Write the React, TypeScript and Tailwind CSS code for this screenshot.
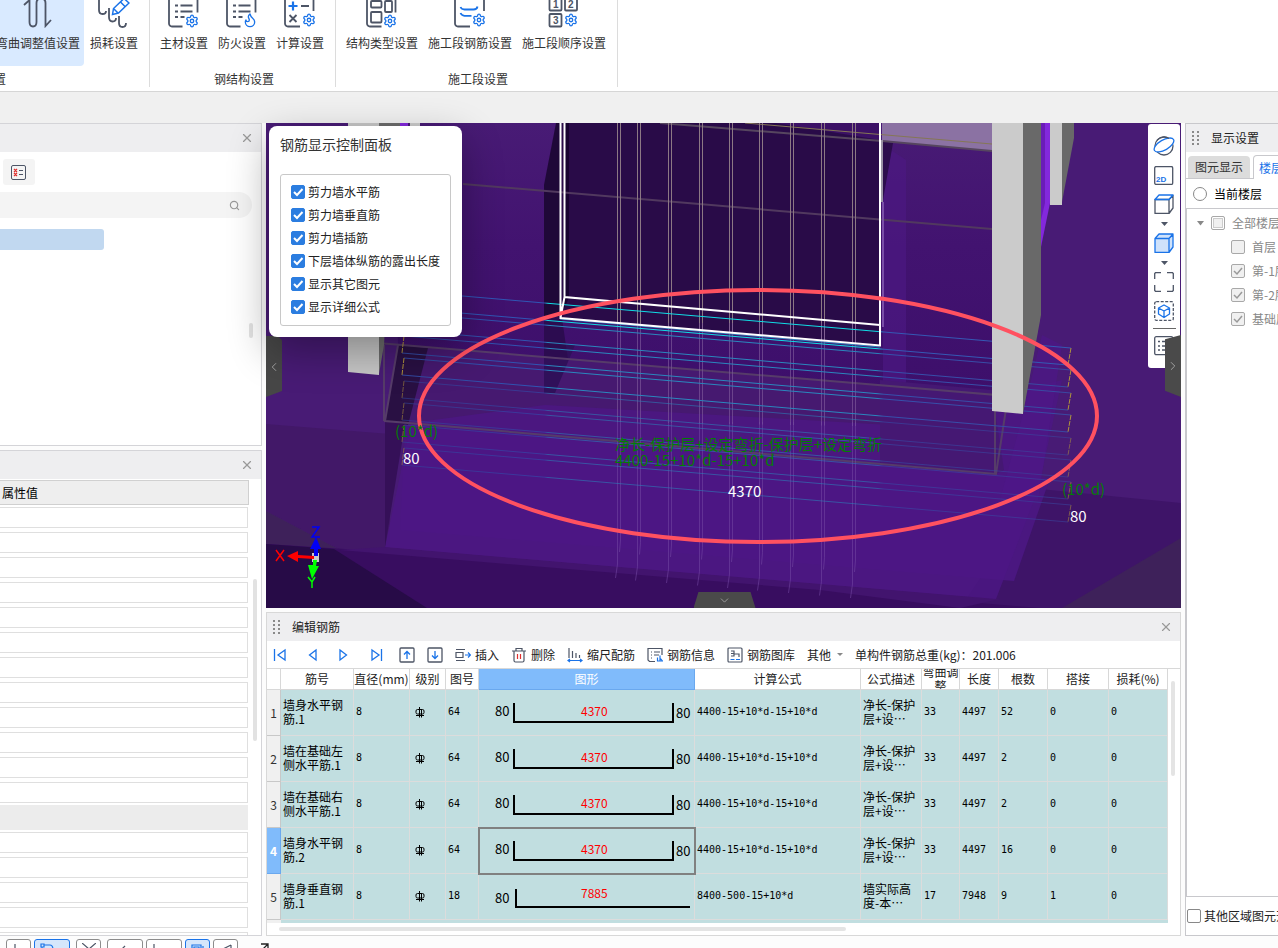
import type { ReactNode } from "react";
import { ChevronDown, ChevronLeft, ChevronRight, Flame, Search, Settings, X } from "lucide-react";

const INK = "#4d5566";
const BLUE = "#1a73e8";

type RibbonItem = {
  label: string;
  icon: ReactNode;
  active?: boolean;
};

type RebarRow = {
  name: string;
  no: string;
  shape: "u" | "l";
  total: string;
  formula: string;
  desc: string;
  bend: string;
  length: string;
  count: string;
  lap: string;
};

const BAR_FORMULA = "4400-15+10*d-15+10*d";

const rows: RebarRow[] = [
  { name: "墙身水平钢筋.1", no: "64", shape: "u", total: "4370", formula: BAR_FORMULA, desc: "净长-保护层+设…", bend: "33", length: "4497", count: "52", lap: "0" },
  { name: "墙在基础左侧水平筋.1", no: "64", shape: "u", total: "4370", formula: BAR_FORMULA, desc: "净长-保护层+设…", bend: "33", length: "4497", count: "2", lap: "0" },
  { name: "墙在基础右侧水平筋.1", no: "64", shape: "u", total: "4370", formula: BAR_FORMULA, desc: "净长-保护层+设…", bend: "33", length: "4497", count: "2", lap: "0" },
  { name: "墙身水平钢筋.2", no: "64", shape: "u", total: "4370", formula: BAR_FORMULA, desc: "净长-保护层+设…", bend: "33", length: "4497", count: "16", lap: "0" },
  { name: "墙身垂直钢筋.1", no: "18", shape: "l", total: "7885", formula: "8400-500-15+10*d", desc: "墙实际高度-本…", bend: "17", length: "7948", count: "9", lap: "1" },
];

const displayOptions = [
  "剪力墙水平筋",
  "剪力墙垂直筋",
  "剪力墙插筋",
  "下层墙体纵筋的露出长度",
  "显示其它图元",
  "显示详细公式",
];

/* ---------- ribbon ---------- */

function RibbonIcon({ children }: { children: ReactNode }) {
  return (
    <svg width="32" height="28" viewBox="0 0 32 28" fill="none" stroke={INK} strokeWidth="1.8">
      {children}
    </svg>
  );
}

function Gear({ x, y }: { x: number; y: number }) {
  return <Settings x={x - 7} y={y - 7} size={14} color={BLUE} strokeWidth={2.2} />;
}

const docLines = (
  <>
    <path d="M1 0V23.5a3 3 0 0 0 3 3H14.5M29.5 0V12.5" />
    <path d="M7 5.5h3M12.5 5.5h12M7 11.5h3M12.5 11.5h12M7 17h3M12.5 17h4" />
  </>
);

const bendItems: RibbonItem[] = [
  {
    label: "弯曲调整值设置",
    active: true,
    icon: (
      <RibbonIcon>
        <path d="M2 5L7.5 0V22q0 4.5 3.5 4.5t3.5-4.5V3q0-4.5 4.5-4.5T23.5 3V26L29 20" />
      </RibbonIcon>
    ),
  },
  {
    label: "损耗设置",
    icon: (
      <RibbonIcon>
        <path d="M1 0V10q0 4 3.5 4T8 11M11 8V17q0 4.500 3.5 4.5T18 18M21 16V23q0 4 3.5 4T28 23" />
        <path d="M14.5 14.5l1-6L26-1.5 31 3 20.5 13zM22.5 2l4.5 4.5M16 9l4 4" stroke={BLUE} strokeWidth="1.5" />
      </RibbonIcon>
    ),
  },
];

const steelItems: RibbonItem[] = [
  {
    label: "主材设置",
    icon: (
      <RibbonIcon>
        {docLines}
        <Gear x={24} y={21} />
      </RibbonIcon>
    ),
  },
  {
    label: "防火设置",
    icon: (
      <RibbonIcon>
        {docLines}
        <Flame x={16} y={12} size={16} color={BLUE} strokeWidth={2} />
      </RibbonIcon>
    ),
  },
  {
    label: "计算设置",
    icon: (
      <RibbonIcon>
        <path d="M1 0V23.5a3 3 0 0 0 3 3H16M29.5 0V11M17 6h8M5.5 15l7 7M12.5 15l-7 7" />
        <path d="M4.5 6h9M9 1.5v9" stroke={BLUE} strokeWidth="2.2" />
        <Gear x={25} y={20} />
      </RibbonIcon>
    ),
  },
];

const stageItems: RibbonItem[] = [
  {
    label: "结构类型设置",
    icon: (
      <RibbonIcon>
        <path d="M1 0V23.5a3 3 0 0 0 3 3H15.5M29.5 0V12.5" />
        <rect x="5" y="1" width="10.5" height="6.5" rx="1" />
        <rect x="19" y="1" width="7" height="11" rx="1" />
        <rect x="5" y="12" width="10.5" height="10.5" rx="1" />
        <Gear x={24} y={21} />
      </RibbonIcon>
    ),
  },
  {
    label: "施工段钢筋设置",
    icon: (
      <RibbonIcon>
        <path d="M1 0V23.5a3 3 0 0 0 3 3H16M30 0V11" />
        <path d="M6.5 7q1 2.5 4 2.5h9q3.5 0 4-3M6.5 13q1 2.5 4 2.8h7" stroke={BLUE} />
        <Gear x={25} y={20} />
      </RibbonIcon>
    ),
  },
  {
    label: "施工段顺序设置",
    icon: (
      <RibbonIcon>
        <rect x="1.5" y="-2" width="12" height="12.5" rx="1" />
        <rect x="17" y="-2" width="12" height="12.5" rx="1" />
        <rect x="1.5" y="14" width="12" height="12.5" rx="1" />
        <g className="font-['Liberation_Sans',sans-serif] text-[10px] font-bold" fill={INK} stroke="none">
          <text x="5" y="8">1</text>
          <text x="20" y="8">2</text>
          <text x="5" y="24">3</text>
        </g>
        <Gear x={23} y={20} />
      </RibbonIcon>
    ),
  },
];

function RibbonButtons({ items }: { items: RibbonItem[] }) {
  return (
    <div className="flex gap-0.5">
      {items.map((item) => (
        <button
          key={item.label}
          className={`flex h-[66px] shrink-0 flex-col items-center gap-[5px] rounded-b px-1 ${item.active ? "bg-[#d9eaff]" : ""}`}
        >
          {item.icon}
          <span className="whitespace-nowrap leading-5">{item.label}</span>
        </button>
      ))}
    </div>
  );
}

function RibbonGroup({ title, items }: { title: string; items: RibbonItem[] }) {
  return (
    <div className="flex h-[87px] flex-col justify-between border-r border-[#dcdcdc] pl-1.5 pr-[7px]">
      <RibbonButtons items={items} />
      <div className="pl-1 text-center leading-4">{title}</div>
    </div>
  );
}

function Ribbon() {
  return (
    <header className="flex h-[92px] shrink-0 overflow-hidden border-b border-[#d6d6d6] bg-white">
      <div className="flex h-[87px] w-[150px] flex-col items-end justify-between overflow-hidden border-r border-[#dcdcdc] pr-[7px]">
        <RibbonButtons items={bendItems} />
        <div className="-ml-1.5 self-start leading-4">置</div>
      </div>
      <RibbonGroup title="钢结构设置" items={steelItems} />
      <RibbonGroup title="施工段设置" items={stageItems} />
    </header>
  );
}

/* ---------- left side ---------- */

function LeftSidebar() {
  return (
    <aside className="flex w-[262px] shrink-0 flex-col gap-1">
      <section className="flex h-[323px] shrink-0 flex-col border-y border-r border-[#d4d4d8] bg-white">
        <div className="flex h-7 items-center justify-end bg-[#eeeef0] pr-[7px]">
          <button aria-label="关闭">
            <X size={14} color="#999" strokeWidth={2} />
          </button>
        </div>
        <div className="px-[3px] pt-[7px]">
          <button aria-label="列表" className="flex h-[26px] w-8 items-center justify-center rounded-[3px] bg-[#f4f4f4]">
            <svg width="16" height="15" viewBox="0 0 16 15" fill="none" stroke={INK}>
              <rect x="0.5" y="0.5" width="14" height="14" rx="1.5" />
              <path d="M8 5.5h4M8 9.5h4" />
              <path d="M3 4l3 3M6 4l-3 3M3 8l3 3M6 8l-3 3" stroke="#e03030" strokeWidth="1.3" />
            </svg>
          </button>
        </div>
        <label className="mt-[7px] mr-[9px] flex h-[26px] items-center rounded-r-full bg-[#f4f4f4] pr-3">
          <input aria-label="搜索" className="min-w-0 flex-1 bg-transparent outline-none" />
          <Search size={11} color="#999" strokeWidth={2.5} />
        </label>
        <div className="relative flex-1 pt-[11px]">
          <div className="h-[21px] w-[104px] rounded-r-[3px] bg-[#c1d8f0]" />
          <div className="absolute right-2 top-[105px] h-[15px] w-1 rounded-full bg-[#e2e2e2]" />
        </div>
      </section>

      <section className="flex min-h-0 flex-1 flex-col border-y border-r border-[#d4d4d8] bg-white">
        <div className="flex h-7 shrink-0 items-center justify-end bg-[#eeeef0] pr-[7px]">
          <button aria-label="关闭">
            <X size={14} color="#999" strokeWidth={2} />
          </button>
        </div>
        <div className="relative mt-px min-h-0 flex-1 overflow-hidden">
          <div className="mr-3 h-[25px] border border-l-0 border-[#d0d0d0] bg-[#eeeeee] pl-0.5 leading-6 text-black">
            属性值
          </div>
          {Array.from({ length: 18 }, (_, i) =>
            i === 12 ? (
              <div key={i} className="mr-[13px] h-[25px] bg-[#ececec]" />
            ) : (
              <div key={i} className="mr-[13px] h-[25px] py-0.5">
                <input
                  aria-label={`属性值 ${i + 1}`}
                  className="block h-[21px] w-full border border-l-0 border-[#dfdfdf] bg-white outline-none"
                />
              </div>
            ),
          )}
          <div className="absolute right-1 top-[99px] h-[162px] w-1 rounded-full bg-[#e2e2e2]" />
        </div>
      </section>
    </aside>
  );
}

/* ---------- 3D view ---------- */

const verticalBars = [617, 637, 668, 699, 729, 759, 790, 821, 852];
const hoopBars = [348, 370, 393, 415, 438, 460, 482, 505];

function Scene() {
  return (
    <svg
      className="absolute inset-0 h-full w-full bg-[#481b75]"
      viewBox="266 123 915 485"
      preserveAspectRatio="xMidYMid slice"
      fill="none"
    >
      <defs>
        <linearGradient id="bar" gradientUnits="userSpaceOnUse" x1="400" x2="1072" y1="0" y2="0">
          <stop offset="0" stopColor="#32479e" />
          <stop offset="0.215" stopColor="#2f55b4" />
          <stop offset="0.22" stopColor="#2a86bd" />
          <stop offset="0.71" stopColor="#2a86bd" />
          <stop offset="0.72" stopColor="#3550ac" />
          <stop offset="1" stopColor="#3a48a0" />
        </linearGradient>
        <linearGradient id="barTop" gradientUnits="userSpaceOnUse" x1="400" x2="1072" y1="0" y2="0">
          <stop offset="0.215" stopColor="#2f55b4" />
          <stop offset="0.22" stopColor="#10dce4" />
          <stop offset="0.71" stopColor="#10dce4" />
          <stop offset="0.72" stopColor="#3458b4" />
        </linearGradient>
        <linearGradient id="backWall" x1="0" x2="0" y1="0" y2="1">
          <stop offset="0" stopColor="#481b75" />
          <stop offset="0.45" stopColor="#421370" />
          <stop offset="1" stopColor="#3d0f6b" />
        </linearGradient>
      </defs>

      {/* ground */}
      <path d="M266 424L390 434V548L340 550 266 511z" fill="#421868" />
      <path d="M266 511L340 550 266 544z" fill="#3e215a" />
      <path d="M1040 489L1181 503V608H960z" fill="#3e1468" />
      <path d="M266 544L345 549 1181 620V608H266z" fill="#380d60" />
      <path d="M340 550L385 547 1000 599 960 608 820 590z" fill="#42146e" />
      <path d="M266 544L334 549 427 608H266z" fill="#270b47" />
      <path d="M1062 608L1181 538V608z" fill="#3e215a" />

      {/* back wall */}
      <path d="M390 123H992V395L398 345z" fill="url(#backWall)" />
      <path d="M883 145L906 160V390L883 385z" fill="#4b1882" opacity="0.7" />
      <path d="M883 141L893 143 883 200z" fill="#2c0d4c" />

      {/* footing */}
      <path d="M398 345L1008 396 996 474 385 421z" fill="#461970" />
      <path d="M405 425L1050 478 1014 581 400 530z" fill="#4a1780" />
      <path d="M411 423L545 405 890 425 1062 380 1038 490 996 599 385 547z" fill="#4c1784" opacity="0.8" />
      <path d="M880 380L992 390 1004 470 996 474 880 465z" fill="#451873" />
      <path d="M1023 414L1042 335 1062 345 1038 500H1000z" fill="#4e1888" opacity="0.6" />
      <path d="M385 421L405 424 385 547z" fill="#351058" />
      <path d="M398 345L428 348 408 425 385 421z" fill="#291043" />
      <path d="M544 340L575 345 555 393H544z" fill="#30105a" />

      {/* selected wall */}
      <path d="M556 123H562V318L544 316V185z" fill="#1f0838" />
      <path d="M544 316L562 318 568 360 544 358z" fill="#2c0c50" />
      <path d="M561 123H880V345L560 318z" fill="#290b48" />
      <path d="M565 123H569V298L563 310z" fill="#170330" />
      <path d="M776 123H880V140z" fill="#3c1166" />

      {/* beam */}
      <path d="M882 123H992V151L882 141z" fill="#8b72a3" />
      <path d="M745 123L992 144" stroke="#857755" />
      <path d="M660 123L882 141 992 151" stroke="#56465f" strokeWidth="2" />
      <path d="M463 184L992 229" stroke="#51395f" strokeWidth="2" />
      <path d="M882 140V202" stroke="#9a93a5" strokeWidth="2" />
      <path d="M883 202V327" stroke="#7a4ea8" strokeWidth="2" />

      {/* footing edges */}
      <g stroke="#563c69" strokeWidth="2">
        <path d="M378 343L1008 396 996 474 385 421 398 345M384 345V421M995 411V474" />
      </g>

      {/* vertical bars */}
      {verticalBars.map((x, i) => (
        <g key={x}>
          <path d={`M${x + 0.5} 123V${323 + i * 2.6}M${x + 3.5} 123V${323 + i * 2.6}`} stroke="#8c7884" />
          <path
            d={`M${x + 0.5} 323V${422 + i * 0.5}M${x + 3.5} 323V${422 + i * 0.5}`}
            stroke="#7a5598"
            opacity="0.7"
          />
          <path
            d={`M${x + 0.5} 422V${564 + i * 2.5}l-2 14M${x + 3.5} 422V${540 + i * 2.5}l-1 12`}
            stroke="#7548a4"
            opacity="0.55"
          />
        </g>
      ))}

      {/* horizontal bars */}
      {hoopBars.map((y, i) => (
        <g key={y} opacity={i < 4 ? 1 : 0.55}>
          <path
            d={`M404 ${y - 57}L1071 ${y}M402 ${y - 40}L1068 ${y + 17}`}
            stroke={i === 0 ? "url(#barTop)" : "url(#bar)"}
          />
          <path d={`M1071 ${y}L1068 ${y + 17}M404 ${y - 57}L402 ${y - 40}`} stroke="#b0943c" strokeDasharray="5 1" />
        </g>
      ))}
      <path d="M560 319L880 347" stroke="#2a86bd" />

      {/* wall outline */}
      <path d="M560.5 123V318L880 345.5V123M564.5 123V297L880 325M560.5 318L564.5 297" stroke="#fff" strokeWidth="2" />

      {/* columns */}
      <path d="M1041 123H1050V203L1041 247z" fill="#8328dc" />
      <path d="M1041 123H1045V203L1041 220z" fill="#6a1cb8" />
      <path d="M1050 123H1062V205H1050z" fill="#cbcbcb" />
      <path d="M1062 123H1074V138L1062 202z" fill="#696969" />
      <path d="M992 123H1023V414L992 411z" fill="#cbcbcb" />
      <path d="M1023 123H1041V315L1023 414z" fill="#696969" />
      <path d="M348 123H379V375L348 372z" fill="#c6c6c6" />
      <path d="M379 123H400V126H396L384 345 379 374z" fill="#6c6c6c" />
      <path d="M400 123h8v4h-8z" fill="#8328dc" />
      <path d="M410 123h10v4h-10z" fill="#cbcbcb" />

      <ellipse cx="758" cy="416" rx="339" ry="126" stroke="#ff5160" strokeWidth="4" />

      {/* dimension text */}
      <g className="font-['Noto_Sans_CJK_SC',sans-serif] text-[15px]">
        <g fill="#047d06">
          <text x="395" y="437">(10*d)</text>
          <text x="615" y="450">净长-保护层+设定弯折-保护层+设定弯折</text>
          <text x="615" y="466">4400-15+10*d-15+10*d</text>
          <text x="1062" y="495">(10*d)</text>
        </g>
        <g fill="#fff">
          <text x="403" y="464">80</text>
          <text x="728" y="497">4370</text>
          <text x="1070" y="522">80</text>
        </g>
      </g>

      {/* axis */}
      <path d="M312 553h7v9h-7z" fill="#ccc" />
      <path d="M314 559L298 558v4l-11-6 11-5v4l16 1z" fill="#f00" />
      <path d="M314 556v-7h-4l6-12 5 12h-3v7z" fill="#0000f5" />
      <path d="M313 560v5h-5l4 14 7-13h-3l1-6z" fill="#0f0" />
      <path d="M276 550l8 11M284 550l-8 11" stroke="#f00" strokeWidth="1.5" />
      <path d="M312 527h7l-7 10h8" stroke="#0000f5" strokeWidth="1.5" />
      <path d="M308 577l4 5 3-5M312 582v6" stroke="#0f0" strokeWidth="1.5" />
    </svg>
  );
}

function DisplayPanel() {
  return (
    <div className="absolute left-[3px] top-[3px] z-10 w-[193px] rounded-lg bg-white px-[11px] pb-[11px] pt-2 shadow-[0_14px_40px_rgba(0,0,0,0.32)]">
      <h2 className="text-sm leading-5 text-[#333]">钢筋显示控制面板</h2>
      <fieldset className="mt-5 h-[152px] rounded-[3px] border border-[#c8c8c8] px-2.5 pt-[5px]">
        {displayOptions.map((option) => (
          <label key={option} className="flex h-[23px] items-center gap-[3px] whitespace-nowrap text-[#222]">
            <span className="relative h-3.5 w-3.5">
              <input
                type="checkbox"
                defaultChecked
                className="block h-3.5 w-3.5 appearance-none rounded-[2px] border border-[#2b7de0] checked:bg-[#2b7de0]"
              />
              <svg className="pointer-events-none absolute inset-0" viewBox="0 0 14 14" fill="none" stroke="#fff" strokeWidth="2">
                <path d="M3 7l3 3 5.5-6" />
              </svg>
            </span>
            {option}
          </label>
        ))}
      </fieldset>
    </div>
  );
}

function ViewToolbar() {
  return (
    <div className="absolute right-px top-px flex w-8 flex-col items-center rounded-[3px] bg-white pb-3 pt-3">
      <button aria-label="动态观察">
        <svg width="22" height="20" viewBox="0 0 22 20" fill="none" strokeWidth="1.3">
          <circle cx="11" cy="10" r="9" stroke={INK} />
          <ellipse cx="11" cy="9" rx="11" ry="5" transform="rotate(-30 11 9)" stroke={BLUE} fill="#fff" />
          <path d="M4 4.300A9 9 0 0 1 16 2.500" stroke={INK} />
        </svg>
      </button>
      <button aria-label="二维" className="mt-[10px]">
        <svg width="20" height="19" viewBox="0 0 20 19" fill="none">
          <rect x="0.7" y="0.5" width="18" height="18" rx="1.5" stroke={INK} strokeWidth="1.3" />
          <text x="2" y="16" fill={BLUE} className="font-['Liberation_Sans',sans-serif] text-[8px] font-bold">2D</text>
        </svg>
      </button>
      <button aria-label="俯视" className="mt-[9px] flex flex-col items-center gap-2">
        <svg width="20" height="20" viewBox="0 0 20 20" fill="none" strokeWidth="1.3" strokeLinejoin="round">
          <path d="M1 5.5h14v14H1zM15 5.5l4-4V14l-4 5.5" stroke={INK} />
          <path d="M1 5.5L5 1h14l-4 4.5z" stroke={BLUE} />
        </svg>
        <svg width="7" height="4" viewBox="0 0 7 4"><path d="M0 0h7L3.5 4z" fill={INK} /></svg>
      </button>
      <button aria-label="实体" className="mt-[7px] flex flex-col items-center gap-2">
        <svg width="20" height="20" viewBox="0 0 20 20" fill="#cfe2fb" stroke={BLUE} strokeWidth="1.3" strokeLinejoin="round">
          <path d="M1 5.5h14v14H1zM15 5.5l4-4V14l-4 5.5M1 5.5L5 1h14l-4 4.5z" />
        </svg>
        <svg width="7" height="4" viewBox="0 0 7 4"><path d="M0 0h7L3.5 4z" fill={INK} /></svg>
      </button>
      <button aria-label="全屏" className="mt-[7px]">
        <svg width="20" height="20" viewBox="0 0 20 20" fill="none" stroke={INK} strokeWidth="1.3">
          <path d="M7 .7H1.5L.7 1.5V7M13 .7h5.5l.8.8V7M7 19.3H1.5L.7 18.5V13M13 19.3h5.500l.8-.8V13" />
        </svg>
      </button>
      <button aria-label="局部三维" className="mt-[9px]">
        <svg width="20" height="20" viewBox="0 0 20 20" fill="none" strokeWidth="1.3" strokeLinejoin="round">
          <rect x="0.7" y="0.7" width="18.6" height="18.6" rx="1.5" stroke={INK} strokeDasharray="3 1.5" />
          <path d="M10 4l5.5 3v6L10 16.5 4.5 13V7zM4.5 7l5.5 3 5.5-3M10 10v6.5" stroke={BLUE} />
        </svg>
      </button>
      <div className="mt-[7px] h-px w-[23px] bg-[#666]" />
      <button aria-label="显示设置" className="mt-[7px]">
        <svg width="20" height="20" viewBox="0 0 20 20" fill="none" stroke={INK} strokeWidth="1.3">
          <rect x="0.7" y="0.7" width="18" height="18" rx="1.5" />
          <path d="M4 5.5h2M8 5.5h8M4 10h2M8 10h8M4 14h2M8 14h8" />
        </svg>
      </button>
    </div>
  );
}

function Viewport() {
  return (
    <section className="relative min-h-0 flex-1">
      <Scene />
      <button aria-label="收起左侧" className="absolute left-0 top-[213px] flex h-[61px] w-4 items-center justify-center bg-[#474747] [clip-path:polygon(0_0,75%_0,100%_7%,100%_90%,0_100%)]">
        <ChevronLeft size={14} color="#aaa" strokeWidth={1.5} />
      </button>
      <DisplayPanel />
      <ViewToolbar />
      <button aria-label="收起右侧" className="absolute right-0 top-[212px] flex h-[62px] w-4 items-center justify-center bg-[#4a4a4a] [clip-path:polygon(0_7%,100%_0,100%_100%,0_90%)]">
        <ChevronRight size={14} color="#aaa" strokeWidth={1.5} />
      </button>
      <button aria-label="收起下方" className="absolute bottom-0 left-1/2 flex h-4 w-[62px] -translate-x-[30px] items-center justify-center bg-[#4a4a4a] [clip-path:polygon(8%_0,92%_0,100%_100%,0_100%)]">
        <ChevronDown size={13} color="#aaa" strokeWidth={1.5} />
      </button>
    </section>
  );
}

/* ---------- rebar editor ---------- */

function Grip() {
  return (
    <svg width="8" height="16" viewBox="0 0 8 16" fill="#8a8a8a">
      {[1, 5, 9, 13].map((y) => (
        <path key={y} d={`M0 ${y}h2v2h-2zM5 ${y}h2v2h-2z`} />
      ))}
    </svg>
  );
}

function ToolButton({ label, children }: { label: string; children: ReactNode }) {
  return (
    <button className="flex items-center gap-1 whitespace-nowrap">
      <svg width="16" height="16" viewBox="0 0 16 16" fill="none" stroke={INK} strokeWidth="1.2">
        {children}
      </svg>
      {label}
    </button>
  );
}

function NavButton({ label, d, boxed = false }: { label: string; d: string; boxed?: boolean }) {
  return (
    <button aria-label={label}>
      <svg width="16" height="16" viewBox="0 0 16 16" fill="none" stroke={BLUE} strokeWidth="1.3">
        {boxed && <rect x="1" y="1" width="14" height="14" rx="1" stroke={INK} />}
        <path d={d} />
      </svg>
    </button>
  );
}

function EditorToolbar() {
  return (
    <div className="flex h-7 shrink-0 items-center border-b border-[#d8d8d8] pl-[5px]">
      <div className="flex w-[111px] justify-between">
        <NavButton label="首条" d="M2.5 2v12M13 3L6 8l7 5z" />
        <NavButton label="上一条" d="M12 3L5.5 8l6.5 5z" />
        <NavButton label="下一条" d="M5 3l6.5 5L5 13z" />
        <NavButton label="末条" d="M14.5 2v12M5 3l7 5-7 5z" />
      </div>
      <div className="ml-4 flex gap-3">
        <NavButton label="上移" boxed d="M8 12V5M5 7.5L8 4.5l3 3" />
        <NavButton label="下移" boxed d="M8 4v7M5 8.5l3 3 3-3" />
      </div>
      <div className="ml-3 flex items-center gap-3">
        <ToolButton label="插入">
          <path d="M1 2.5h9M1 13.5h9M1 5.5h7v5H1z" />
          <path d="M10 8h5M13 5.5L15.5 8 13 10.5" stroke={BLUE} />
        </ToolButton>
        <ToolButton label="删除">
          <path d="M1 4h14M5 4V1.5h6V4M3 4v9.500q0 1.5 1.5 1.5h7q1.5 0 1.5-1.5V4" />
          <path d="M6.5 7v5M9.5 7v5" stroke="#e03030" />
        </ToolButton>
        <ToolButton label="缩尺配筋">
          <path d="M2 1v10M5.5 4v7M9 6v5M12.5 8v3" />
          <path d="M1.5 13.5h13M3 12l-2 1.5L3 15M13 12l2 1.5-2 1.5" stroke={BLUE} />
        </ToolButton>
        <ToolButton label="钢筋信息">
          <path d="M8 14.5H2.5L1 13V1.5h14V8M4 5h1M7 5h6M4 8h1M7 8h5M4 11h1" />
          <path d="M13 8.500v6M10.500 10.500v3.500h5l-2-2.500" stroke={BLUE} />
        </ToolButton>
        <ToolButton label="钢筋图库">
          <rect x="1" y="1" width="14" height="14" rx="1" />
          <path d="M4 4h3v5H4M4 6.500h3M7 7h5v3" />
          <path d="M3.5 12.5h4M9 12.5h4" stroke={BLUE} />
        </ToolButton>
        <button className="flex items-center gap-1.5 whitespace-nowrap">
          其他
          <svg width="6" height="3" viewBox="0 0 6 3"><path d="M0 0h6L3 3z" fill="#888" /></svg>
        </button>
        <span className="whitespace-nowrap">单构件钢筋总重(kg)：201.006</span>
      </div>
    </div>
  );
}

function ShapeDrawing({ shape, total }: { shape: "u" | "l"; total: string }) {
  const isU = shape === "u";
  return (
    <svg width="215" height="45" viewBox="0 0 215 45" fill="none" className="block">
      <path
        d={isU ? "M35 13V32H194V13" : "M37 15V33H211"}
        stroke="#000"
        strokeWidth="2"
      />
      <g fill="#000" className="text-[13px]">
        <text x="16" y={isU ? 26 : 29}>80</text>
        {isU && <text x="197" y="28">80</text>}
      </g>
      <text x="102" y={isU ? 26 : 24} fill="#f00" className="text-xs">{total}</text>
    </svg>
  );
}

function GradeMark() {
  return (
    <svg width="10" height="11" viewBox="0 0 10 11" fill="none" stroke="#000">
      <rect x="1" y="2.5" width="8" height="4.5" rx="1.5" />
      <path d="M4.500 0V10.500M6.500 2.5V10.500M1 8.5h8" />
    </svg>
  );
}

const headers = ["筋号", "直径(mm)", "级别", "图号", "图形", "计算公式", "公式描述", "弯曲调整", "长度", "根数", "搭接", "损耗(%)"];

const CELL = "h-[46px] overflow-hidden border-b border-r border-[#dcdcdc] pt-0 pr-0 pb-0.5 pl-0.5";
const NUM = "font-['DejaVu_Sans_Mono',monospace] text-[10px]";

function RebarTable() {
  return (
    <table className="w-full table-fixed border-separate border-spacing-0 text-left text-black">
      <colgroup>
        <col className="w-[14px]" />
        <col className="w-[73px]" />
        <col className="w-[56px]" />
        <col className="w-[36px]" />
        <col className="w-[33px]" />
        <col className="w-[216px]" />
        <col />
        <col className="w-[61px]" />
        <col className="w-[38px]" />
        <col className="w-[39px]" />
        <col className="w-[49px]" />
        <col className="w-[61px]" />
        <col className="w-[59px]" />
      </colgroup>
      <thead>
        <tr>
          <th className="h-[21px] border-b border-r border-[#d8d8d8] bg-white p-0" />
          {headers.map((header) => (
            <th
              key={header}
              className={`h-[21px] border-b border-r p-0 text-center font-normal ${
                header === "图形" ? "border-[#6aa8ee] bg-[#80bbfb] font-medium text-white" : "border-[#d8d8d8] bg-white text-[#222]"
              }`}
            >
              <div className="flex h-5 items-center justify-center overflow-hidden leading-[14px]">{header}</div>
            </th>
          ))}
        </tr>
      </thead>
      <tbody className="bg-[#c1dee0]">
        {rows.map((row, i) => {
          const selected = i === 3;
          return (
            <tr key={row.name}>
              <th
                className={`h-[46px] border-b border-r p-0 text-center ${
                  selected ? "border-[#6aa8ee] bg-[#80bbfb] font-bold text-white" : "border-[#c8c8c8] bg-[#f0f0f0] font-normal text-[#333]"
                }`}
              >
                {i + 1}
              </th>
              <td className={`${CELL} leading-[14px]`}>{row.name}</td>
              <td className={`${CELL} ${NUM}`}>8</td>
              <td className="h-[46px] border-b border-r border-[#dcdcdc] p-0 pl-[5px]"><GradeMark /></td>
              <td className={`${CELL} ${NUM}`}>{row.no}</td>
              <td
                className={`h-[46px] border-b border-r border-[#dcdcdc] p-0 ${
                  selected ? "outline-2 -outline-offset-1 outline-[#808080]" : ""
                }`}
              >
                <ShapeDrawing shape={row.shape} total={row.total} />
              </td>
              <td className={`${CELL} ${NUM}`}>{row.formula}</td>
              <td className={`${CELL} leading-[14px]`}>{row.desc}</td>
              <td className={`${CELL} ${NUM}`}>{row.bend}</td>
              <td className={`${CELL} ${NUM}`}>{row.length}</td>
              <td className={`${CELL} ${NUM}`}>{row.count}</td>
              <td className={`${CELL} ${NUM}`}>{row.lap}</td>
              <td className={`${CELL} ${NUM}`}>0</td>
            </tr>
          );
        })}
        <tr>
          <th className="h-5 bg-[#f0f0f0]" />
          <td colSpan={12} />
        </tr>
      </tbody>
    </table>
  );
}

function RebarEditor() {
  return (
    <section className="flex h-[324px] shrink-0 flex-col border border-[#d8d8d8] bg-white text-[#222]">
      <div className="flex h-7 shrink-0 items-center bg-[#eeeef0] pl-1.5 pr-[7px]">
        <Grip />
        <h2 className="ml-[11px] flex-1">编辑钢筋</h2>
        <button aria-label="关闭">
          <X size={14} color="#999" strokeWidth={2} />
        </button>
      </div>
      <EditorToolbar />
      <div className="flex h-[254px] shrink-0 overflow-hidden">
        <div className="min-w-0 flex-1">
          <RebarTable />
        </div>
        <div className="w-3 shrink-0 pl-[3px] pt-3">
          <div className="h-[95px] w-1 rounded-full bg-[#e4e4e4]" />
        </div>
      </div>
      <div className="ml-3 mt-1 h-1 w-[567px] rounded-full bg-[#e4e4e4]" />
    </section>
  );
}

/* ---------- right side ---------- */

function FloorNode({ label, checked = false }: { label: string; checked?: boolean }) {
  return (
    <label className="flex h-6 items-center gap-[7px] whitespace-nowrap pl-11 text-[#888]">
      <span className="relative h-3.5 w-3.5 shrink-0">
        <input
          type="checkbox"
          disabled
          checked={checked}
          readOnly
          className="block h-3.5 w-3.5 appearance-none rounded-[2px] border border-[#a8a8a8] bg-[#f0f0f0]"
        />
        {checked && (
          <svg className="absolute inset-0" viewBox="0 0 14 14" fill="none" stroke="#999" strokeWidth="1.5">
            <path d="M3 7l3 3 5-6" />
          </svg>
        )}
      </span>
      {label}
    </label>
  );
}

function FloorPanel() {
  return (
    <aside className="flex w-[93px] shrink-0 flex-col overflow-hidden border-y border-l border-[#c8c8cc] bg-white">
      <div className="flex h-7 shrink-0 items-center gap-[11px] bg-[#eeeef0] pl-1.5 text-[#222]">
        <Grip />
        <h2 className="whitespace-nowrap">显示设置</h2>
      </div>
      <div className="flex h-[27px] shrink-0 items-end gap-[3px] border-b border-[#c8c8cc] pl-0.5">
        <button className="h-[22px] w-[62px] shrink-0 rounded-t bg-[#dcdcdc] text-[#333]">图元显示</button>
        <button className="-mb-px h-6 shrink-0 whitespace-nowrap rounded-t border border-b-0 border-[#c8c8cc] bg-white px-[5px] text-[#1a73e8]">
          楼层显示
        </button>
      </div>
      <label className="flex h-[29px] shrink-0 items-center gap-[7px] whitespace-nowrap pl-[7px] text-black">
        <input type="radio" name="floor" className="h-3.5 w-3.5 appearance-none rounded-full border border-[#888]" />
        当前楼层
      </label>
      <div className="min-h-0 flex-1 border-y border-l border-[#c8c8cc] pt-0.5">
        <label className="flex h-6 items-center whitespace-nowrap pl-2.5 text-[#888]">
          <svg width="7" height="5" viewBox="0 0 7 5" className="mr-[7px] shrink-0"><path d="M0 0h7L3.5 4.5z" fill="#888" /></svg>
          <input
            type="checkbox"
            disabled
            className="mr-[7px] h-3.5 w-3.5 shrink-0 appearance-none rounded-[2px] border border-[#a8a8a8] bg-[#f0f0f0] shadow-[inset_0_0_0_1px_#fff,inset_0_0_0_2px_#ccc]"
          />
          全部楼层
        </label>
        <FloorNode label="首层" />
        <FloorNode label="第-1层" checked />
        <FloorNode label="第-2层" checked />
        <FloorNode label="基础层" checked />
      </div>
      <label className="flex h-[38px] shrink-0 items-center gap-[3px] whitespace-nowrap pl-px text-[#222]">
        <input type="checkbox" className="h-3.5 w-3.5 shrink-0 appearance-none rounded-[2px] border border-[#888]" />
        其他区域图元开关
      </label>
    </aside>
  );
}

/* ---------- bottom bar ---------- */

function StatusButton({ label, wide, on, d }: { label: string; wide?: boolean; on?: boolean; d: string }) {
  return (
    <button
      aria-label={label}
      className={`flex h-5 shrink-0 items-start rounded-[3px] border pl-[5px] pt-[3px] ${wide ? "w-9" : "w-[25px]"} ${
        on ? "border-[#1a73e8] bg-[#d5e6fb]" : "border-[#8c8c8c] bg-white"
      }`}
    >
      <svg width="14" height="12" viewBox="0 0 14 12" fill="none" stroke={on ? BLUE : INK} strokeWidth="1.2">
        <path d={d} />
      </svg>
    </button>
  );
}

function BottomBar() {
  return (
    <footer className="flex h-3 shrink-0 items-start gap-1.5 overflow-hidden bg-[#fcfcfc] pl-1.5 pt-[3px]">
      <div className="flex gap-[3px]">
        <StatusButton label="直角" d="M3 1v8h7" />
        <StatusButton label="交点" wide on d="M1 1h3v3H1zM4 2h6q3 0 3 5M2 4v5" />
      </div>
      <StatusButton label="垂点" d="M0 0l7 6 7-6M4 8h6" />
      <div className="flex gap-[3px]">
        <StatusButton label="中点" wide d="M6 9l6-6" />
        <StatusButton label="顶点" wide d="M2 1v8h8" />
        <StatusButton label="坐标" on d="M1 2h9v7H1zM3 4h5v3H3zM12 3v6" />
        <StatusButton label="捕捉" d="M1 6h3l8-4M4 6v3M12 2v3" />
      </div>
      <svg width="12" height="9" viewBox="0 0 12 9" className="ml-4 shrink-0" fill="none" stroke="#222" strokeWidth="1.3">
        <path d="M1 5h7v6M8 5L1 12" />
      </svg>
    </footer>
  );
}

export default function App() {
  return (
    <div className="flex h-screen flex-col overflow-hidden bg-[#f0f0f0] font-['Noto_Sans_CJK_SC',sans-serif] text-xs text-[#333]">
      <Ribbon />
      <div className="h-[31px] shrink-0" />
      <main className="flex min-h-0 flex-1 gap-1 bg-[#fcfcfc]">
        <LeftSidebar />
        <div className="flex min-w-0 flex-1 flex-col gap-1">
          <Viewport />
          <RebarEditor />
        </div>
        <FloorPanel />
      </main>
      <BottomBar />
    </div>
  );
}
